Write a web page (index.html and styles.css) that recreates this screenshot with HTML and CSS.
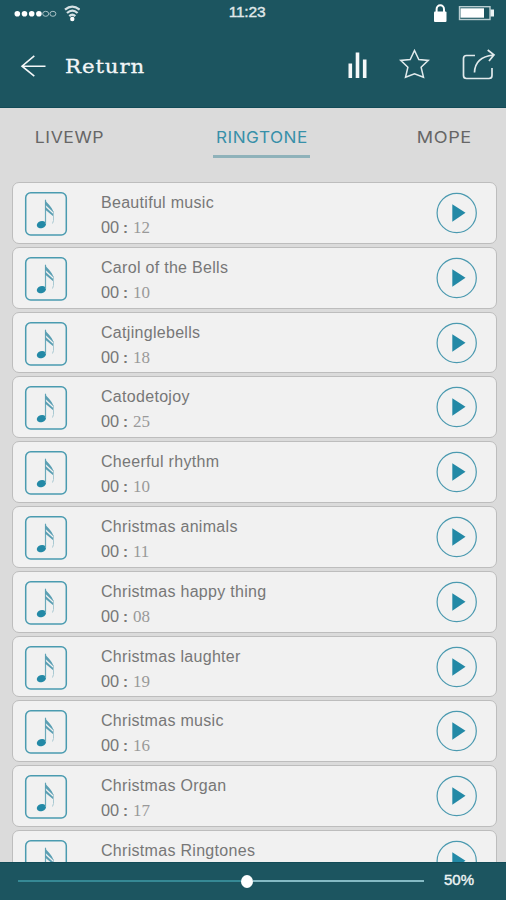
FILE: index.html
```html
<!DOCTYPE html>
<html lang="en">
<head>
<meta charset="utf-8">
<title>Ringtones</title>
<link rel="stylesheet" href="styles.css">
</head>
<body>
<svg class="defs" aria-hidden="true">
  <symbol id="note" viewBox="0 0 44 46">
    <rect x="1.700" y="1.700" width="40.600" height="42.200" rx="5" fill="none" stroke="#4a9bb0" stroke-width="1.500"/>
    <ellipse cx="17.400" cy="33.600" rx="4.700" ry="3.500" transform="rotate(-18 17.400 33.600)" fill="#2389a6"/>
    <path d="M21.500 33V8.800" stroke="#6aa9ba" stroke-width="1.200"/>
    <path d="M21 8.300c.8 3.500 7.300 7 8.500 13.200L21 13.500ZM21 15.500l8.500 7.700v2.300L21 18.500Z" fill="#5b9fb3"/>
    <path d="M29.500 20v9.500l-1 3" fill="none" stroke="#a9c9d2" stroke-width="1"/>
  </symbol>
  <symbol id="play" viewBox="0 0 42 42">
    <circle cx="20.700" cy="21" r="19.600" fill="none" stroke="#4c9ab0" stroke-width="1.200"/>
    <path d="M16.300 12.200 29.500 20.700 16.300 29.800Z" fill="#2389a6"/>
  </symbol>
</svg>
<div class="screen">
  <header class="header">
    <div class="status">
      <svg class="signal" width="66" height="18" viewBox="0 0 66 18">
        <g fill="#fff"><circle cx="3.300" cy="8.800" r="2.800"/><circle cx="10.500" cy="8.800" r="2.800"/><circle cx="17.700" cy="8.800" r="2.800"/><circle cx="24.900" cy="8.800" r="2.800"/></g>
        <g fill="none" stroke="#a9c1c6" stroke-width="1"><ellipse cx="31.700" cy="8.800" rx="3" ry="2.500"/><ellipse cx="38.900" cy="8.800" rx="3" ry="2.500"/></g>
        <g fill="none" stroke="#d5e1e4" stroke-width="2.300"><path d="M51 4.700q7.300-6.200 14.600 0M53 8q5.300-4.800 10.600 0M55.300 11.100q3-2.700 6 0"/></g>
        <circle cx="58.300" cy="14" r="2.200" fill="#fff"/>
      </svg>
      <span class="clock">11:23</span>
      <svg class="power" width="62" height="20" viewBox="0 0 62 20">
        <rect x="1" y="8.500" width="12.500" height="10.500" rx="1" fill="#fff"/>
        <path d="M3.600 9V6.200a3.700 4 0 0 1 7.400 0V9" fill="none" stroke="#fff" stroke-width="2"/>
        <rect x="26.500" y="3.700" width="30.500" height="12.800" fill="none" stroke="#b9cdd1" stroke-width="1.400"/>
        <path d="M27.500 5.300h23.500v9.400H27.500Z" fill="#fff"/><path d="M57.500 6.500h3.500v7h-3.500Z" fill="#edf3f4"/>
      </svg>
    </div>
    <div class="toolbar">
      <svg width="26" height="24" viewBox="0 0 26 24" fill="none" stroke="#f4f7f8" stroke-width="1.600"><path d="M25.500 12.200H2M14.300 1.900 2 12.200l12.300 10"/></svg>
      <h1 class="title">Return</h1>
      <svg class="actions" width="148" height="34" viewBox="0 0 148 34" fill="none" stroke="#e1eaec">
        <path d="M2.300 15.500v14.500M9.500 4.500v25.500M16.700 11.500v18.500" stroke="#f5f8f9" stroke-width="3.600"/>
        <path d="m66.500 2.500 4.300 9 9.500.9-7.200 6.900 2.400 10-9-3.500-9 3.500 2.400-10-7.200-6.900 9.500-.9Z" stroke-width="1.500"/>
        <path d="M127 7.500h-8.500a3 3 0 0 0-3 3v17a3 3 0 0 0 3 3h22.500a3 3 0 0 0 3-3V20M126.500 24.500q.5-15.500 18.800-17.500M139.700 2l6.300 4.800-5 6.200" stroke-width="1.700"/>
      </svg>
    </div>
  </header>
  <nav class="tabs">
    <div class="tab tab-live"><span>LIVEWP</span></div>
    <div class="tab tab-active"><span>RINGTONE</span></div>
    <div class="tab tab-more"><span>MOPE</span></div>
  </nav>
  <main class="list">
    <div class="row"><svg class="note"><use href="#note"/></svg><div class="info"><div class="name">Beautiful music</div><div class="time"><b>00</b><i>:</i><span>12</span></div></div><svg class="play"><use href="#play"/></svg></div>
    <div class="row"><svg class="note"><use href="#note"/></svg><div class="info"><div class="name">Carol of the Bells</div><div class="time"><b>00</b><i>:</i><span>10</span></div></div><svg class="play"><use href="#play"/></svg></div>
    <div class="row"><svg class="note"><use href="#note"/></svg><div class="info"><div class="name">Catjinglebells</div><div class="time"><b>00</b><i>:</i><span>18</span></div></div><svg class="play"><use href="#play"/></svg></div>
    <div class="row"><svg class="note"><use href="#note"/></svg><div class="info"><div class="name">Catodetojoy</div><div class="time"><b>00</b><i>:</i><span>25</span></div></div><svg class="play"><use href="#play"/></svg></div>
    <div class="row"><svg class="note"><use href="#note"/></svg><div class="info"><div class="name">Cheerful rhythm</div><div class="time"><b>00</b><i>:</i><span>10</span></div></div><svg class="play"><use href="#play"/></svg></div>
    <div class="row"><svg class="note"><use href="#note"/></svg><div class="info"><div class="name">Christmas animals</div><div class="time"><b>00</b><i>:</i><span>11</span></div></div><svg class="play"><use href="#play"/></svg></div>
    <div class="row"><svg class="note"><use href="#note"/></svg><div class="info"><div class="name">Christmas happy thing</div><div class="time"><b>00</b><i>:</i><span>08</span></div></div><svg class="play"><use href="#play"/></svg></div>
    <div class="row"><svg class="note"><use href="#note"/></svg><div class="info"><div class="name">Christmas laughter</div><div class="time"><b>00</b><i>:</i><span>19</span></div></div><svg class="play"><use href="#play"/></svg></div>
    <div class="row"><svg class="note"><use href="#note"/></svg><div class="info"><div class="name">Christmas music</div><div class="time"><b>00</b><i>:</i><span>16</span></div></div><svg class="play"><use href="#play"/></svg></div>
    <div class="row"><svg class="note"><use href="#note"/></svg><div class="info"><div class="name">Christmas Organ</div><div class="time"><b>00</b><i>:</i><span>17</span></div></div><svg class="play"><use href="#play"/></svg></div>
    <div class="row"><svg class="note"><use href="#note"/></svg><div class="info"><div class="name">Christmas Ringtones</div></div><svg class="play"><use href="#play"/></svg></div>
  </main>
  <footer class="volume">
    <div class="track"><div class="played"></div><div class="thumb"></div><div class="rest"></div></div>
    <span class="percent">50%</span>
  </footer>
</div>
</body>
</html>
```
FILE: styles.css
```css
* { box-sizing: border-box; }
body { margin: 0; font-family: "Liberation Sans", Arial, sans-serif; }
svg { display: block; flex: none; }
.defs { position: absolute; width: 0; height: 0; }
.screen { width: 506px; height: 900px; display: flex; flex-direction: column; overflow: hidden; background: #dbdbdb; }

.header { flex: none; height: 108px; background: #1c5560; border-bottom: 1px solid #124b57; }
.status { display: grid; grid-template-columns: 66px 1fr 62px; align-items: start; height: 48px; padding: 4px 11px 0 14px; }
.signal { margin-top: 1px; }
.power { margin-top: -1px; }
.clock { justify-self: center; margin: -1px 0 0 -19px; font-size: 15.5px; line-height: 18px; color: #e0e9eb; -webkit-text-stroke: .4px #e0e9eb; letter-spacing: -.2px; }
.toolbar { display: flex; align-items: flex-start; padding: 6px 10px 0 20px; }
.title { margin: 1px 0 0 19px; flex: 1; font: 400 19px/22px "DejaVu Serif", serif; color: #f3f6f7; letter-spacing: .8px; transform: scaleX(1.12); transform-origin: left; -webkit-text-stroke: .3px #f3f6f7; }
.actions { margin-top: -6px; }

.tabs { flex: none; height: 74px; display: flex; justify-content: space-between; padding: 19px 34px 0; }
.tab { height: 31px; font-family: Inter, sans-serif; font-size: 16px; line-height: 20px; font-weight: 400; color: #666; display: flex; justify-content: center; }
.tab span { transform: scaleX(1.1); letter-spacing: .5px; }
.tab-live { width: 70px; }
.tab-active { width: 97px; margin-left: 2px; color: #3790a9; border-bottom: 3px solid #8fb2ba; }
.tab-active span { transform: scaleX(1.07); }
.tab-more { width: 55px; }
.tab-more span { transform: scaleX(1.13); }

.list { flex: 1; min-height: 0; overflow: hidden; padding: 0 9px 0 12px; display: flex; flex-direction: column; gap: 3px; }
.row { flex: none; height: 61.8px; display: flex; border: 1.5px solid #bdbdbd; border-radius: 7px; background: #f1f1f1; padding: 8px 18px 0 11px; }
.note { width: 44px; height: 46px; }
.info { flex: 1; padding-left: 33px; }
.name { margin-top: 2px; font-size: 16px; line-height: 20px; letter-spacing: .3px; color: #777; white-space: nowrap; }
.time { display: flex; margin-top: 5px; font-size: 17px; line-height: 20px; color: #777; }
.time b { width: 22px; font-weight: 400; transform: scaleX(.96); transform-origin: left; }
.time i { width: 10px; font-style: normal; font-weight: 700; font-size: 15px; }
.time span { font-family: "Liberation Serif", serif; font-size: 17px; color: #999; }
.play { width: 42px; height: 42px; margin-top: 1px; }

.volume { flex: none; height: 38px; display: flex; align-items: center; padding: 0 31px 1px 18px; background: #1c5560; border-top: 1px solid #124b57; }
.track { width: 406px; display: flex; align-items: center; }
.played { width: 223px; height: 2px; background: #368995; }
.thumb { width: 12px; height: 13px; border-radius: 50%; background: #fff; }
.rest { flex: 1; height: 2px; background: #85bac4; }
.percent { margin: -2px 0 0 20px; font-size: 15px; line-height: 18px; color: #edf3f4; -webkit-text-stroke: .4px #edf3f4; }
```
